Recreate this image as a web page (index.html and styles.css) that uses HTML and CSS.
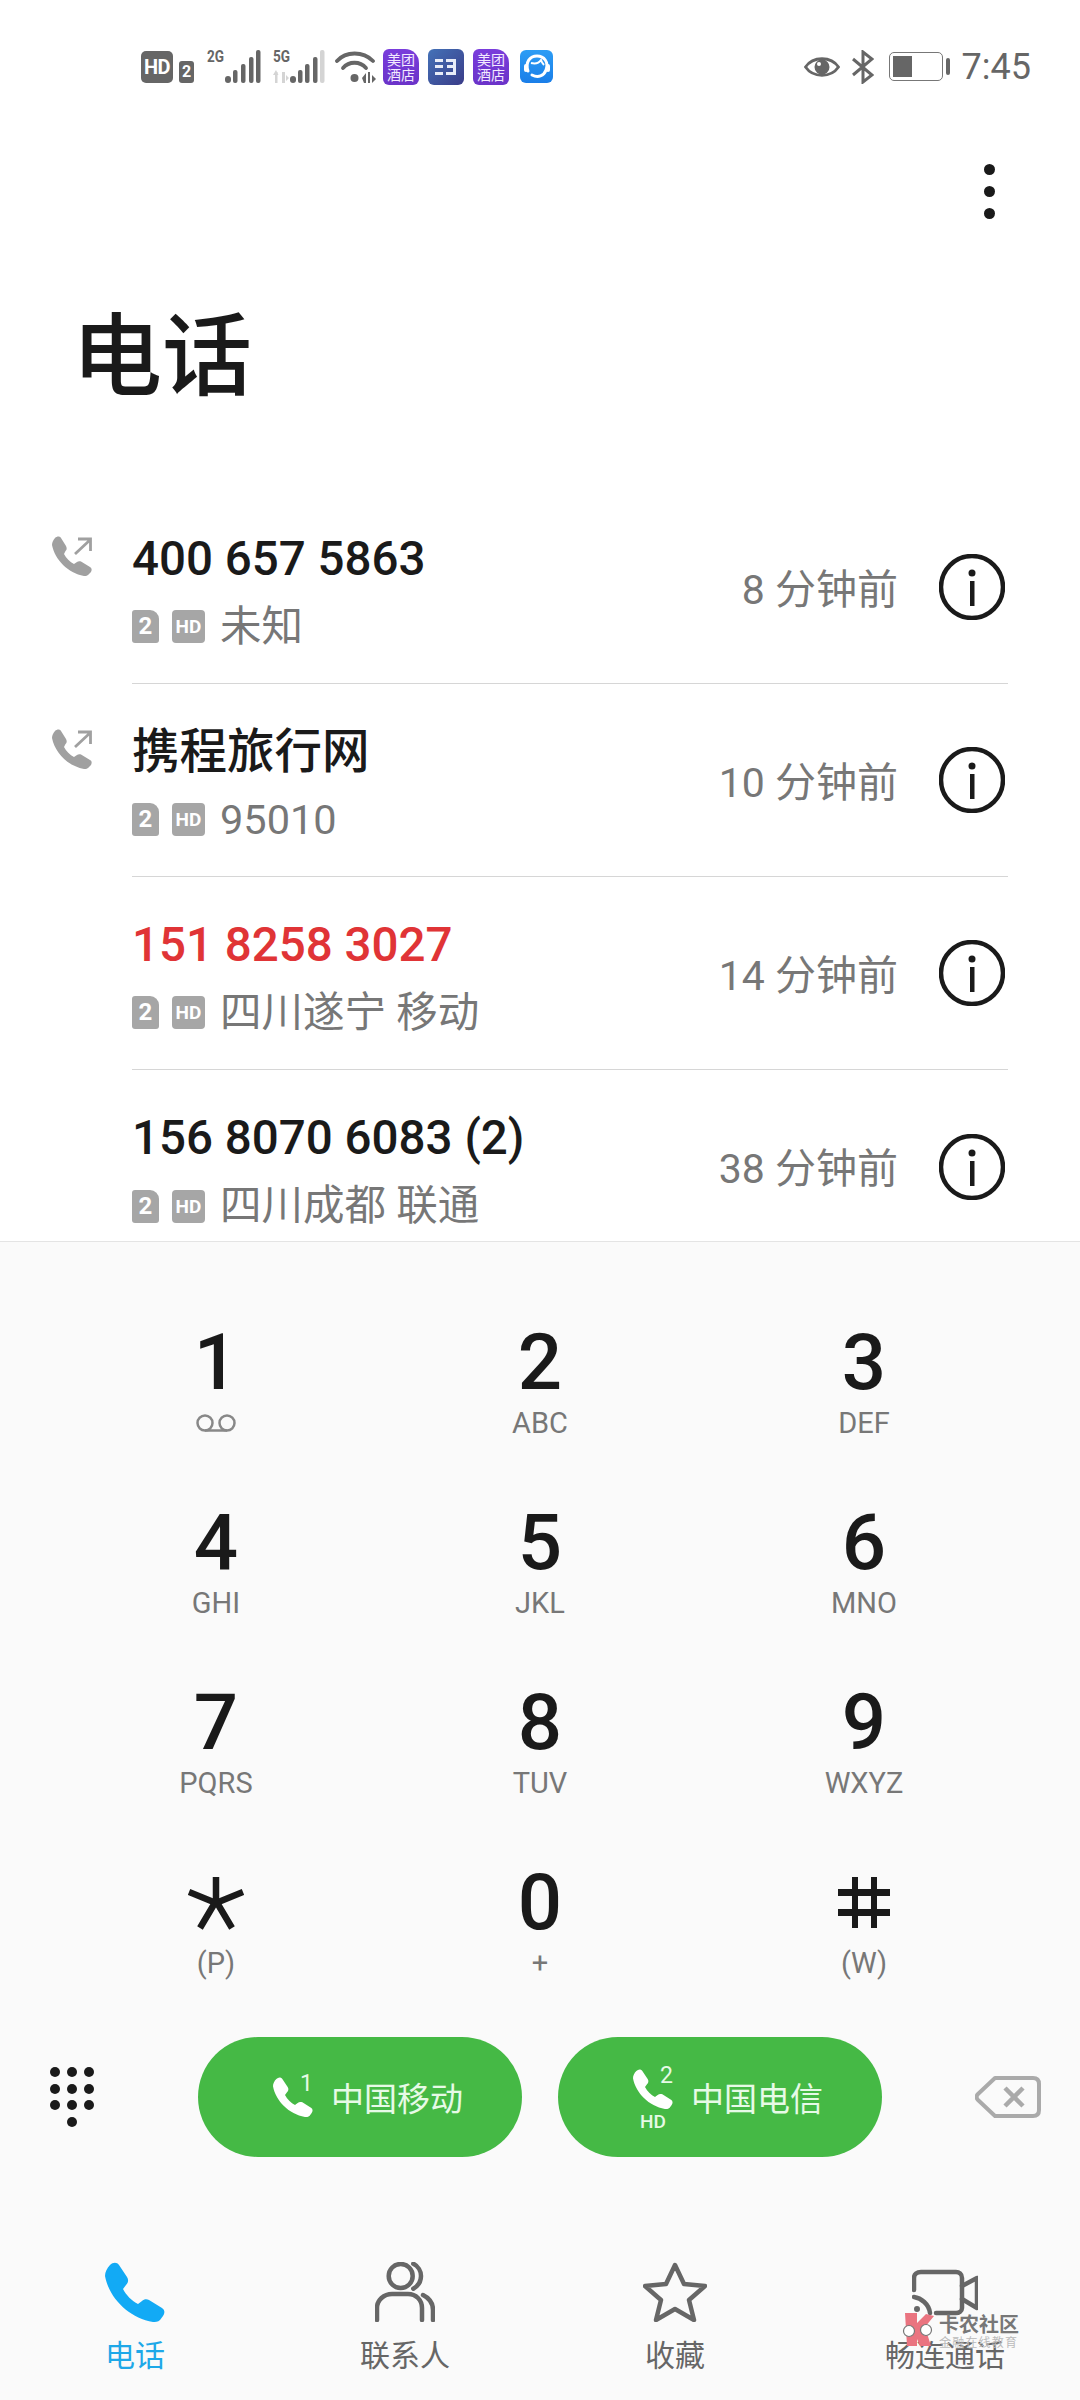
FILE: index.html
```html
<!DOCTYPE html>
<html lang="zh-CN">
<head>
<meta charset="utf-8">
<title>电话</title>
<link rel="stylesheet" href="styles.css">
</head>
<body>
<svg class="defs" width="0" height="0" aria-hidden="true">
  <symbol id="phone" viewBox="0 0 60 60"><path d="M5 3C8 0 12 0 14 3L22 15C24 18 23 21 21 23L18 27C21 33 27 39 33 42L37 39C39 37 42 37 44 38L57 46C60 48 60 51 58 54L55 58C53 60 50 60 48 60C24 56 4 36 0 14C0 10 2 6 5 3Z"/></symbol>
  <symbol id="info" viewBox="0 0 66 66"><circle cx="33" cy="33" r="31" fill="none" stroke="#1a1a1a" stroke-width="4.500"/><circle cx="33" cy="19" r="3.500" fill="#1a1a1a"/><rect x="31" y="27" width="4.500" height="25" fill="#1a1a1a"/></symbol>
  <symbol id="outgoing" viewBox="0 0 40 40"><path fill="#a0a0a0" d="M3 2C5 0 8 0 9 2L14 10C15 12 15 14 13.500 15L12 18C14 22 18 26 22 28L25 26C26 25 28 25 29 25.500L38 31C40 32 40 34 39 36L36 39C35 40 33 40 32 40C16 37 3 24 0 9C0 7 1 4 3 2Z"/><path fill="none" stroke="#a0a0a0" stroke-width="2.800" d="M23 18L38 4M26 3H38.500V15"/></symbol>
</svg>
<main class="app">
  <header class="status">
    <div class="status-left">
      <span class="hd-badge">HD</span>
      <span class="hd-sim">2</span>
      <span class="signal">
        <span class="net">2G</span>
        <svg class="bars" width="36" height="34" viewBox="0 0 36 34"><g fill="#666"><rect x="0" y="26" width="6" height="7" rx="3"/><rect x="8" y="20" width="4.500" height="13" rx="2"/><rect x="16" y="14" width="4.500" height="19" rx="2"/><rect x="24" y="7" width="4.500" height="26" rx="2"/><rect x="31" y="0" width="4.500" height="33" rx="2"/></g></svg>
      </span>
      <span class="signal signal-five">
        <span class="net">5G</span>
        <svg class="bars" width="52" height="34" viewBox="0 0 52 34"><g fill="#d4d4d4"><rect x="2" y="22" width="2.500" height="11"/><path d="M0 25L3 20L5.500 25ZM9 22H12V33H9ZM13 25V31L16 28Z"/><rect x="47" y="0" width="4.500" height="33" rx="2"/></g><g fill="#666"><rect x="17" y="26" width="6" height="7" rx="3"/><rect x="25" y="20" width="4.500" height="13" rx="2"/><rect x="32" y="14" width="4.500" height="19" rx="2"/><rect x="40" y="7" width="4.500" height="26" rx="2"/></g></svg>
      </span>
      <svg class="wifi" width="41" height="34" viewBox="0 0 41 34"><g fill="none" stroke="#666" stroke-width="3.800" stroke-linecap="round"><path d="M2 11C11 1 28 1 38 11"/><path d="M8 18C14 11 25 11 31 18"/></g><circle cx="19.500" cy="28" r="4" fill="#666"/><path fill="#666" d="M27 28L31 23V33H29ZM33 22H35V33H33ZM37 25L41 29L37 33Z"/></svg>
      <span class="app-icon app-purple"><span class="app-text">美团<br>酒店</span></span>
      <span class="app-icon app-indigo"><svg width="22" height="18" viewBox="0 0 22 18"><g fill="#e8ecf8"><rect x="0" y="1" width="8" height="3"/><rect x="0" y="7" width="8" height="3"/><rect x="0" y="14" width="8" height="3"/><rect x="11" y="1" width="9" height="3"/><rect x="12" y="7" width="8" height="3"/><rect x="11" y="14" width="9" height="3"/><rect x="18" y="1" width="3" height="16"/></g></svg></span>
      <span class="app-icon app-purple"><span class="app-text">美团<br>酒店</span></span>
      <span class="app-icon app-blue"><svg width="28" height="28" viewBox="0 0 28 28"><path fill="none" stroke="#fff" stroke-width="3" stroke-linecap="round" d="M5 18C2 9 7 3 14 3C21 3 26 9 23 17C21 23 15 25 9 22"/><path fill="none" stroke="#fff" stroke-width="2" d="M8 10C12 11 16 10 18 7C19 10 20 11 21 12"/><rect x="1" y="11" width="4" height="8" rx="2" fill="#fff"/><rect x="23" y="11" width="4" height="8" rx="2" fill="#fff"/></svg></span>
    </div>
    <div class="status-right">
      <svg width="36" height="26" viewBox="0 0 36 26"><path fill="none" stroke="#666" stroke-width="2.800" d="M1.500 13C9 2 27 2 34.500 13C27 24 9 24 1.500 13Z"/><circle cx="18" cy="13" r="7.500" fill="#666"/><circle cx="15" cy="10" r="2" fill="#fff"/></svg>
      <svg width="22" height="34" viewBox="0 0 22 34"><path fill="none" stroke="#666" stroke-width="3" d="M1 9L20 25L11 32V2L20 9L1 25"/></svg>
      <span class="battery"><span class="battery-body"><span class="battery-fill"></span></span><span class="battery-nub"></span></span>
      <span class="clock">7:45</span>
    </div>
  </header>

  <div class="toolbar">
    <span class="more"><span class="more-dot"></span><span class="more-dot"></span><span class="more-dot"></span></span>
  </div>
  <h1 class="title">电话</h1>

  <section class="log">
    <article class="row">
      <span class="dir"><svg class="dir-icon"><use href="#outgoing"/></svg></span>
      <div class="row-main">
        <div class="who">
          <div class="name">400 657 5863</div>
          <div class="sub"><span class="sim">2</span><span class="hd">HD</span><span class="place">未知</span></div>
        </div>
        <span class="when">8 分钟前</span>
        <svg class="info"><use href="#info"/></svg>
      </div>
    </article>
    <article class="row">
      <span class="dir"><svg class="dir-icon"><use href="#outgoing"/></svg></span>
      <div class="row-main">
        <div class="who">
          <div class="name">携程旅行网</div>
          <div class="sub"><span class="sim">2</span><span class="hd">HD</span><span class="place">95010</span></div>
        </div>
        <span class="when">10 分钟前</span>
        <svg class="info"><use href="#info"/></svg>
      </div>
    </article>
    <article class="row">
      <span class="dir"></span>
      <div class="row-main">
        <div class="who">
          <div class="name name-missed">151 8258 3027</div>
          <div class="sub"><span class="sim">2</span><span class="hd">HD</span><span class="place">四川遂宁 移动</span></div>
        </div>
        <span class="when">14 分钟前</span>
        <svg class="info"><use href="#info"/></svg>
      </div>
    </article>
    <article class="row">
      <span class="dir"></span>
      <div class="row-main">
        <div class="who">
          <div class="name">156 8070 6083 (2)</div>
          <div class="sub"><span class="sim">2</span><span class="hd">HD</span><span class="place">四川成都 联通</span></div>
        </div>
        <span class="when">38 分钟前</span>
        <svg class="info"><use href="#info"/></svg>
      </div>
    </article>
  </section>

  <section class="panel">
    <div class="keypad">
      <div class="key"><span class="digit">1</span><span class="letters"><svg width="42" height="20" viewBox="0 0 42 20"><g fill="none" stroke="#888" stroke-width="2.500"><circle cx="10" cy="10" r="7.500"/><circle cx="32" cy="10" r="7.500"/><path d="M10 17.500H32"/></g></svg></span></div>
      <div class="key"><span class="digit">2</span><span class="letters">ABC</span></div>
      <div class="key"><span class="digit">3</span><span class="letters">DEF</span></div>
      <div class="key"><span class="digit">4</span><span class="letters">GHI</span></div>
      <div class="key"><span class="digit">5</span><span class="letters">JKL</span></div>
      <div class="key"><span class="digit">6</span><span class="letters">MNO</span></div>
      <div class="key"><span class="digit">7</span><span class="letters">PQRS</span></div>
      <div class="key"><span class="digit">8</span><span class="letters">TUV</span></div>
      <div class="key"><span class="digit">9</span><span class="letters">WXYZ</span></div>
      <div class="key"><span class="digit"><svg width="56" height="80" viewBox="0 0 56 80" role="img" aria-label="*"><g stroke="#1a1a1a" stroke-width="6.500" fill="none"><path d="M28 14V40"/><path d="M1 29L28 40L55 29"/><path d="M12 65L28 38L44 65"/></g></svg></span><span class="letters">(P)</span></div>
      <div class="key"><span class="digit">0</span><span class="letters">+</span></div>
      <div class="key"><span class="digit"><svg width="54" height="80" viewBox="0 0 54 80" role="img" aria-label="#"><g fill="#1a1a1a"><rect x="15" y="14" width="6" height="51"/><rect x="34" y="14" width="6" height="51"/><rect x="1" y="26" width="52" height="7"/><rect x="1" y="46" width="52" height="7"/></g></svg></span><span class="letters">(W)</span></div>
    </div>

    <div class="call-row">
      <span class="pad-toggle">
        <span class="pad-dot"></span><span class="pad-dot"></span><span class="pad-dot"></span>
        <span class="pad-dot"></span><span class="pad-dot"></span><span class="pad-dot"></span>
        <span class="pad-dot"></span><span class="pad-dot"></span><span class="pad-dot"></span>
        <span class="pad-dot pad-last"></span>
      </span>
      <div class="call-btn">
        <span class="call-mark"><svg class="call-phone"><use href="#phone"/></svg><span class="call-sim">1</span></span>
        <span class="call-label">中国移动</span>
      </div>
      <div class="call-btn call-btn-two">
        <span class="call-mark"><svg class="call-phone"><use href="#phone"/></svg><span class="call-sim">2</span><span class="call-hd">HD</span></span>
        <span class="call-label">中国电信</span>
      </div>
      <svg class="backspace" width="66" height="42" viewBox="0 0 66 42"><path fill="none" stroke="#aaa" stroke-width="4" stroke-linejoin="round" d="M20 2H58C62 2 64 4 64 8V34C64 38 62 40 58 40H20L3 24C1 22 1 20 3 18Z"/><path fill="none" stroke="#aaa" stroke-width="4.500" d="M30 12L48 30M48 12L30 30"/></svg>
    </div>

    <nav class="tabs">
      <div class="tab tab-active"><svg class="tab-icon"><use href="#phone"/></svg><span class="tab-label">电话</span></div>
      <div class="tab"><svg class="tab-icon tab-line" viewBox="0 0 60 60"><circle cx="25.700" cy="14" r="12"/><path d="M38.300 1.700C43 4 46 9 46 14C46 19 43 24 38.300 26.700"/><path d="M2 58V46C2 38 9 32 17 32H33C41 32 47 38 47 46V58"/><path d="M48 33C54 36 58 41 58 48V58"/></svg><span class="tab-label">联系人</span></div>
      <div class="tab"><svg class="tab-icon tab-star tab-line" viewBox="0 0 64 60"><path d="M32 3L41 22L62 24L46 38L51 58L32 47L13 58L18 38L2 24L23 22Z"/></svg><span class="tab-label">收藏</span></div>
      <div class="tab"><svg class="tab-icon tab-video tab-line" viewBox="0 0 66 60"><path d="M2 28V16C2 12 5 10 9 10H44C47 10 50 12 50 16V46C50 49 47 51 44 51H24"/><path d="M50 24L65 16V46L50 37"/><path d="M2 35C9 36 17 42 18 51"/><circle class="tab-dot" cx="5" cy="47" r="2"/></svg><span class="tab-label">畅连通话</span></div>
      <div class="watermark">
        <svg class="wm-logo" width="34" height="34" viewBox="0 0 34 34"><path fill="#ea7480" d="M3 0H15V10L24 1L32 3L23 14L29 33H18L15 26V33H5Z"/><g fill="#fff" stroke="#777" stroke-width="1.200"><circle cx="7" cy="18" r="5.500"/><circle cx="24" cy="17" r="5.500"/></g></svg>
        <div class="wm-copy"><span class="wm-name">卡农社区</span><span class="wm-tag">金融在线教育</span></div>
      </div>
    </nav>
  </section>
</main>
</body>
</html>
```

FILE: styles.css
```css
* { box-sizing: border-box; }
html, body { margin: 0; padding: 0; background: #fff; }
body { font-family: Roboto, "Noto Sans CJK SC", sans-serif; color: #1a1a1a; }
.defs { position: absolute; }
.app { width: 1080px; height: 2400px; display: flex; flex-direction: column; overflow: hidden; background: #fff; }

/* status bar */
.status { height: 130px; flex: none; display: flex; align-items: center; justify-content: space-between; padding: 3px 49px 0 141px; }
.status-left, .status-right { display: flex; align-items: center; }
.hd-badge { width: 32px; height: 32px; border-radius: 5px; background: #666; color: #fff; font-size: 20px; font-weight: 700; line-height: 32px; text-align: center; letter-spacing: -0.5px; }
.hd-sim { width: 15px; height: 22px; margin: 10px 0 0 6px; border-radius: 3px; background: #666; color: #fff; font-size: 16px; font-weight: 700; line-height: 22px; text-align: center; }
.signal { position: relative; display: block; width: 54px; height: 34px; margin-left: 13px; }
.signal-five { margin-left: 12px; width: 52px; }
.net { position: absolute; left: 0; top: -3px; font-size: 17px; line-height: 18px; font-weight: 700; color: #666; transform: scaleX(.8); transform-origin: left; }
.bars { position: absolute; right: 0; top: 0; }
.wifi { margin-left: 10px; }
.app-icon { width: 36px; height: 36px; margin-left: 9px; border-radius: 6px; display: flex; align-items: center; justify-content: center; flex: none; }
.wifi + .app-icon { margin-left: 7px; }
.app-purple { background: linear-gradient(#7a3ddc, #6b33c8); border-top-right-radius: 14px; }
.app-indigo { background: linear-gradient(135deg, #4472b8, #3a3c88); }
.app-blue { width: 33px; height: 33px; margin-left: 11px; background: linear-gradient(#2c9df5, #1a7ee8); }
.app-text { color: #f3eaff; font-family: "Noto Sans CJK SC", sans-serif; font-size: 14px; line-height: 15px; text-align: center; }
.status-right svg { display: block; }
.status-right svg + svg { margin-left: 12px; }
.battery { display: flex; align-items: center; margin-left: 15px; }
.battery-body { width: 54px; height: 29px; padding: 3px; border: 1.500px solid #777; border-radius: 5px; display: block; }
.battery-fill { display: block; width: 19px; height: 100%; background: #666; }
.battery-nub { width: 4px; height: 17px; margin-left: 3px; border-radius: 2px; background: #666; }
.clock { margin-left: 12px; font-size: 36px; line-height: 44px; color: #666; }

/* header */
.toolbar { height: 122px; flex: none; display: flex; align-items: center; justify-content: flex-end; padding-right: 85px; }
.more { display: flex; flex-direction: column; gap: 11px; }
.more-dot { width: 11px; height: 11px; border-radius: 50%; background: #1a1a1a; }
.title { height: 239px; flex: none; margin: 0; padding: 47px 0 0 72px; font-family: "Noto Sans CJK SC", sans-serif; font-size: 90px; line-height: 100px; font-weight: 500; color: #1a1a1a; }

/* call log */
.log { flex: 1; min-height: 0; overflow: hidden; }
.row { height: 193px; display: flex; padding-left: 52px; padding-right: 72px; }
.dir { width: 80px; flex: none; padding-top: 45px; }
.dir-icon { width: 40px; height: 40px; display: block; }
.row-main { flex: 1; min-width: 0; display: flex; align-items: center; border-bottom: 1px solid #d6d6d6; }
.row:last-child .row-main { border-bottom: 0; }
.who { flex: 1; min-width: 0; padding-top: 11px; }
.name { font-size: 47.500px; line-height: 60px; font-weight: 500; color: #1a1a1a; font-family: Roboto, "Noto Sans CJK SC", sans-serif; white-space: nowrap; }
.name-missed { color: #e03436; }
.sub { display: flex; align-items: center; margin-top: 8px; height: 60px; }
.sim, .hd { height: 33px; background: #a6a6a6; color: #fff; font-weight: 700; text-align: center; line-height: 33px; flex: none; }
.sim { width: 27px; font-size: 24px; border-radius: 3px 9px 3px 3px; }
.hd { width: 33px; margin-left: 13px; font-size: 19px; border-radius: 4px; }
.place { margin-left: 15px; font-size: 41.500px; line-height: 60px; color: #777; white-space: nowrap; }
.when { font-size: 41px; line-height: 60px; color: #777; white-space: nowrap; margin-right: 41px; padding-top: 5px; }
.info { width: 66px; height: 66px; flex: none; margin-right: 3px; }

/* dial panel */
.panel { position: relative; height: 1159px; flex: none; background: #fafafa; border-top: 1px solid #e4e4e4; padding-top: 81px; }
.keypad { display: grid; grid-template-columns: repeat(3, 324px); row-gap: 60px; padding-left: 54px; }
.key { height: 120px; display: flex; flex-direction: column; align-items: center; }
.digit { height: 80px; display: flex; align-items: center; justify-content: center; font-size: 78px; line-height: 80px; font-weight: 500; color: #1a1a1a; }
.letters { height: 40px; display: flex; align-items: center; font-size: 29px; line-height: 40px; color: #777; }

.call-row { display: flex; align-items: center; height: 120px; margin-top: 54px; padding-left: 50px; }
.pad-toggle { width: 44px; display: grid; grid-template-columns: repeat(3, 10px); column-gap: 7px; row-gap: 6.500px; margin-right: 104px; }
.pad-dot { width: 10px; height: 10px; border-radius: 50%; background: #1a1a1a; }
.pad-last { grid-column: 2; }
.call-btn { width: 324px; height: 120px; border-radius: 60px; background: #45b945; color: #e6fae6; display: flex; align-items: center; padding-left: 75px; flex: none; }
.call-btn-two { margin-left: 36px; }
.call-mark { position: relative; width: 58px; height: 40px; display: block; flex: none; }
.call-phone { width: 40px; height: 40px; display: block; fill: #fff; }
.call-sim { position: absolute; left: 27px; top: -6px; font-size: 23px; line-height: 26px; color: #e6fae6; }
.call-hd { position: absolute; left: 7px; top: 42px; font-size: 19px; line-height: 22px; font-weight: 500; color: #e6fae6; }
.call-btn-two .call-mark { top: -8px; }
.call-label { font-family: "Noto Sans CJK SC", sans-serif; font-size: 33px; line-height: 44px; white-space: nowrap; }
.backspace { margin-left: 93px; flex: none; }

.tabs { position: absolute; left: 0; right: 0; top: 1020px; display: grid; grid-template-columns: repeat(4, 270px); }
.tab { display: flex; flex-direction: column; align-items: center; }
.tab-icon { width: 60px; height: 60px; display: block; fill: #666; }
.tab-star { width: 64px; }
.tab-video { width: 66px; }
.tab-line { fill: none; stroke: #666; stroke-width: 4.500; stroke-linecap: round; stroke-linejoin: round; }
.tab-dot { fill: #666; stroke-width: 2; }
.tab-label { margin-top: 11px; font-family: "Noto Sans CJK SC", sans-serif; font-size: 30px; line-height: 40px; color: #666; white-space: nowrap; }
.tab-active .tab-icon { fill: #12aaf5; }
.tab-active .tab-label { color: #1ea8e8; }
.watermark { position: absolute; left: 902px; top: 51px; display: flex; align-items: flex-start; }
.wm-copy { display: flex; flex-direction: column; margin-left: 3px; }
.wm-name { font-family: "Noto Sans CJK SC", sans-serif; font-size: 20px; line-height: 22px; font-weight: 700; color: #777; letter-spacing: 0; }
.wm-tag { font-family: "Noto Sans CJK SC", sans-serif; font-size: 12px; line-height: 14px; color: #bbb; letter-spacing: 1.200px; }
```
